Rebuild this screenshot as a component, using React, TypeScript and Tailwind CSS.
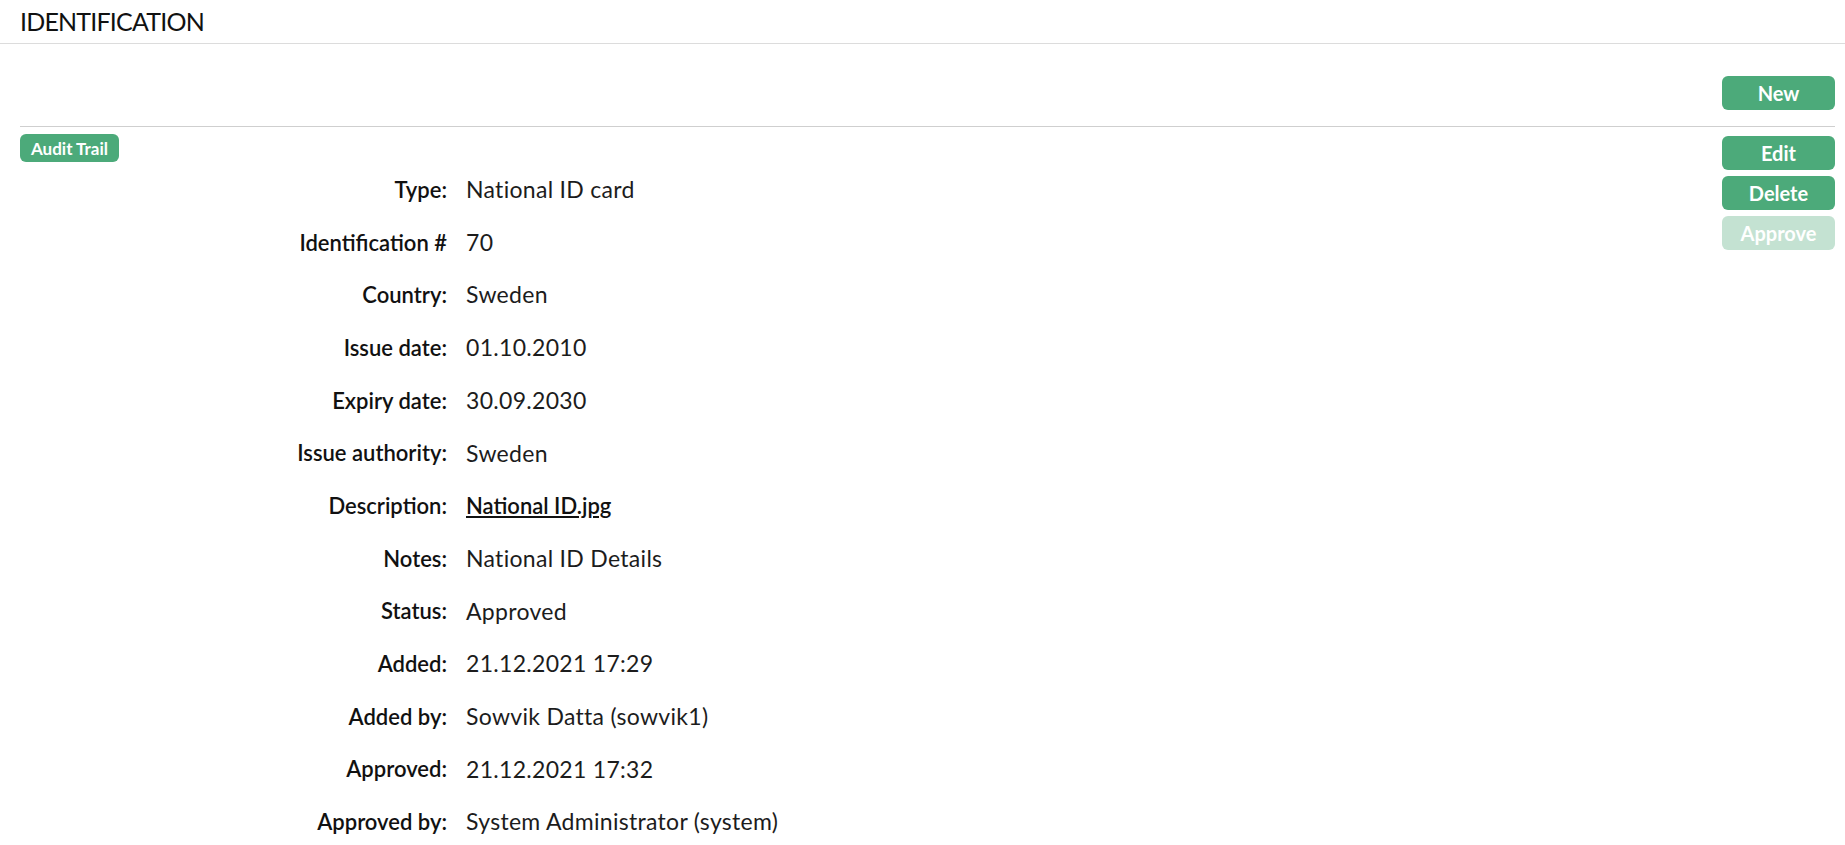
const rows: { label: string; value: string; link?: boolean }[] = [
  { label: 'Type:', value: 'National ID card' },
  { label: 'Identification #', value: '70' },
  { label: 'Country:', value: 'Sweden' },
  { label: 'Issue date:', value: '01.10.2010' },
  { label: 'Expiry date:', value: '30.09.2030' },
  { label: 'Issue authority:', value: 'Sweden' },
  { label: 'Description:', value: 'National ID.jpg', link: true },
  { label: 'Notes:', value: 'National ID Details' },
  { label: 'Status:', value: 'Approved' },
  { label: 'Added:', value: '21.12.2021 17:29' },
  { label: 'Added by:', value: 'Sowvik Datta (sowvik1)' },
  { label: 'Approved:', value: '21.12.2021 17:32' },
  { label: 'Approved by:', value: 'System Administrator (system)' },
];

function ActionButton({ label, disabled }: { label: string; disabled?: boolean }) {
  return (
    <button
      disabled={disabled}
      className={
        'w-[113px] h-[34px] rounded-[6px] text-white font-bold text-[20px] leading-none ' +
        (disabled ? 'bg-[#c4e2d2]' : 'bg-[#4caa7a]')
      }
    >
      {label}
    </button>
  );
}

export default function App() {
  return (
    <div className="min-h-screen bg-white text-[#1c1c1c] font-['Lato','Liberation_Sans',sans-serif]">
      <div className="h-[44px] px-[20px] border-b border-[#dcdcdc] flex items-center">
        <h1 className="text-[25px] font-normal tracking-[-0.8px] text-[#111]">IDENTIFICATION</h1>
      </div>

      <div className="pl-[20px] pr-[10px]">
        <div className="pt-[32px] pb-[16px] flex justify-end border-b border-[#cfcfcf]">
          <ActionButton label="New" />
        </div>

        <div className="flex justify-between pt-[7px]">
          <div className="flex-1">
            <button className="h-[28px] px-[11px] rounded-[6px] bg-[#4caa7a] text-white font-bold text-[17px] leading-none">
              Audit Trail
            </button>
            <div className="flex flex-col pt-[1px]">
              {rows.map((r) => (
                <div key={r.label} className="h-[52.7px] flex items-center">
                  <div className="w-[427px] text-right font-semibold text-[22px] text-[#111]">{r.label}</div>
                  <div className="pl-[19px] text-[23px] tracking-[0.3px]">
                    {r.link ? (
                      <a href="#" className="underline font-semibold text-[#111] tracking-normal text-[22px]">
                        {r.value}
                      </a>
                    ) : (
                      r.value
                    )}
                  </div>
                </div>
              ))}
            </div>
          </div>
          <div className="flex flex-col gap-[6px] pt-[2px]">
            <ActionButton label="Edit" />
            <ActionButton label="Delete" />
            <ActionButton label="Approve" disabled />
          </div>
        </div>
      </div>
    </div>
  );
}
